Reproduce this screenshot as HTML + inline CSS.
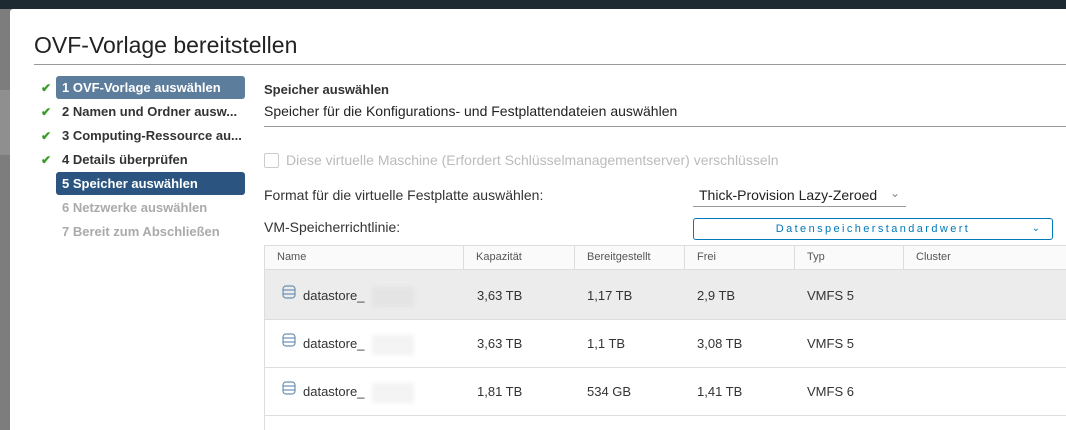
<!DOCTYPE html>
<html><head><style>
body{margin:0;width:1066px;height:430px;overflow:hidden;background:#7d7d7d;font-family:"Liberation Sans",sans-serif;position:relative}
.top{position:absolute;left:0;top:0;width:1066px;height:9px;background:#1e2a31}
.modal{position:absolute;left:10px;top:9px;width:1056px;height:421px;background:#fff;border-radius:3px 0 0 0}
.a{position:absolute;white-space:nowrap}
.title{left:24px;top:23px;font-size:23px;color:#222}
.nav{left:46px;width:189px;height:23px;border-radius:3px;font-size:13px;font-weight:bold;color:#333;line-height:23px;padding-left:6px;box-sizing:border-box}
.ck{left:31px;color:#3a9a2a;font-size:12px;font-weight:bold}
.th{font-size:11px;color:#555;top:242px}
.td{font-size:13px;color:#333}
.hl{height:1px;background:#ddd}
.blur{position:absolute;width:42px;height:20px;background:#f3f3f3;filter:blur(2px)}
</style></head><body>
<div class="top"></div>
<div class="a" style="left:0;top:90px;width:10px;height:65px;background:#8f8f8f"></div>
<div class="modal">
<div class="a title">OVF-Vorlage bereitstellen</div>
<div class="a" style="left:24px;top:55px;width:1032px;height:1px;background:#999"></div>
<div class="a nav" style="top:67px;background:#5d7d9c;color:#fff">1 OVF-Vorlage auswählen</div>
<div class="a nav" style="top:91px">2 Namen und Ordner ausw...</div>
<div class="a nav" style="top:115px">3 Computing-Ressource au...</div>
<div class="a nav" style="top:139px">4 Details überprüfen</div>
<div class="a nav" style="top:163px;background:#2b5580;color:#fff">5 Speicher auswählen</div>
<div class="a nav" style="top:187px;color:#aaa">6 Netzwerke auswählen</div>
<div class="a nav" style="top:211px;color:#aaa">7 Bereit zum Abschließen</div>
<div class="a ck" style="top:72px">✔</div>
<div class="a ck" style="top:96px">✔</div>
<div class="a ck" style="top:120px">✔</div>
<div class="a ck" style="top:144px">✔</div>
<div class="a" style="left:254px;top:73px;font-size:13px;font-weight:bold;color:#333">Speicher auswählen</div>
<div class="a" style="left:254px;top:94px;font-size:14px;color:#222">Speicher für die Konfigurations- und Festplattendateien auswählen</div>
<div class="a" style="left:254px;top:117px;width:802px;height:1px;background:#999"></div>
<div class="a" style="left:254px;top:144px;width:13px;height:13px;border:1px solid #ccc;border-radius:2px"></div>
<div class="a" style="left:276px;top:143px;font-size:14px;color:#bbb">Diese virtuelle Maschine (Erfordert Schlüsselmanagementserver) verschlüsseln</div>
<div class="a" style="left:254px;top:178px;font-size:14px;color:#333">Format für die virtuelle Festplatte auswählen:</div>
<div class="a" style="left:689px;top:178px;font-size:14px;color:#222">Thick-Provision Lazy-Zeroed</div>
<div class="a" style="left:880px;top:177px;font-size:12px;color:#888">⌄</div>
<div class="a" style="left:683px;top:197px;width:213px;height:1px;background:#999"></div>
<div class="a" style="left:254px;top:210px;font-size:14px;color:#333">VM-Speicherrichtlinie:</div>
<div class="a" style="left:683px;top:209px;width:358px;height:20px;border:1px solid #0079b8;border-radius:3px;font-size:11px;color:#0079b8;letter-spacing:2.4px;text-align:center;line-height:20px">Datenspeicherstandardwert<span style="position:absolute;right:12px;letter-spacing:0;font-size:10px">⌄</span></div>
<div class="a" style="left:254px;top:236px;width:802px;height:25px;background:#fafafa;border:1px solid #ddd;border-right:none;box-sizing:border-box"></div>
<div class="a" style="left:254px;top:236px;width:1px;height:185px;background:#ddd"></div>
<div class="a" style="left:453px;top:236px;width:1px;height:25px;background:#ddd"></div>
<div class="a" style="left:564px;top:236px;width:1px;height:25px;background:#ddd"></div>
<div class="a" style="left:674px;top:236px;width:1px;height:25px;background:#ddd"></div>
<div class="a" style="left:784px;top:236px;width:1px;height:25px;background:#ddd"></div>
<div class="a" style="left:893px;top:236px;width:1px;height:25px;background:#ddd"></div>
<div class="a th" style="left:267px">Name</div>
<div class="a th" style="left:466px">Kapazität</div>
<div class="a th" style="left:577px">Bereitgestellt</div>
<div class="a th" style="left:687px">Frei</div>
<div class="a th" style="left:797px">Typ</div>
<div class="a th" style="left:906px">Cluster</div>
<div class="a" style="left:255px;top:261px;width:801px;height:50px;background:#ececec"></div>
<div class="a hl" style="left:255px;top:310px;width:801px"></div>
<div class="a hl" style="left:255px;top:358px;width:801px"></div>
<div class="a hl" style="left:255px;top:406px;width:801px"></div>

<svg class="a" style="left:272px;top:276px" width="14" height="14" viewBox="0 0 14 14"><g fill="none" stroke="#6a8fb0" stroke-width="1.2"><rect x="1" y="1" width="12" height="12" rx="3"/><line x1="1" y1="5" x2="13" y2="5"/><line x1="1" y1="9" x2="13" y2="9"/></g></svg>
<div class="a td" style="left:293px;top:279px">datastore_</div><div class="blur" style="left:362px;top:278px;background:#e4e4e4"></div>
<div class="a td" style="left:467px;top:279px">3,63 TB</div><div class="a td" style="left:577px;top:279px">1,17 TB</div><div class="a td" style="left:687px;top:279px">2,9 TB</div><div class="a td" style="left:797px;top:279px">VMFS 5</div>

<svg class="a" style="left:272px;top:324px" width="14" height="14" viewBox="0 0 14 14"><g fill="none" stroke="#6a8fb0" stroke-width="1.2"><rect x="1" y="1" width="12" height="12" rx="3"/><line x1="1" y1="5" x2="13" y2="5"/><line x1="1" y1="9" x2="13" y2="9"/></g></svg>
<div class="a td" style="left:293px;top:327px">datastore_</div><div class="blur" style="left:362px;top:326px"></div>
<div class="a td" style="left:467px;top:327px">3,63 TB</div><div class="a td" style="left:577px;top:327px">1,1 TB</div><div class="a td" style="left:687px;top:327px">3,08 TB</div><div class="a td" style="left:797px;top:327px">VMFS 5</div>

<svg class="a" style="left:272px;top:372px" width="14" height="14" viewBox="0 0 14 14"><g fill="none" stroke="#6a8fb0" stroke-width="1.2"><rect x="1" y="1" width="12" height="12" rx="3"/><line x1="1" y1="5" x2="13" y2="5"/><line x1="1" y1="9" x2="13" y2="9"/></g></svg>
<div class="a td" style="left:293px;top:375px">datastore_</div><div class="blur" style="left:362px;top:374px"></div>
<div class="a td" style="left:467px;top:375px">1,81 TB</div><div class="a td" style="left:577px;top:375px">534 GB</div><div class="a td" style="left:687px;top:375px">1,41 TB</div><div class="a td" style="left:797px;top:375px">VMFS 6</div>
</div>
</body></html>
